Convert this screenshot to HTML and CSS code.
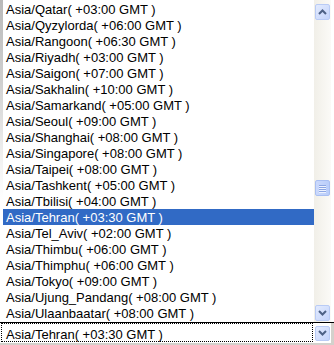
FILE: index.html
```html
<!DOCTYPE html>
<html>
<head>
<meta charset="utf-8">
<link rel="stylesheet" href="styles.css">
</head>
<body>
<div class="combo">
  <div class="popup">
    <div class="edge"></div>
    <ul class="options">
      <li>Asia/Qatar( +03:00 GMT )</li>
      <li>Asia/Qyzylorda( +06:00 GMT )</li>
      <li>Asia/Rangoon( +06:30 GMT )</li>
      <li>Asia/Riyadh( +03:00 GMT )</li>
      <li>Asia/Saigon( +07:00 GMT )</li>
      <li>Asia/Sakhalin( +10:00 GMT )</li>
      <li>Asia/Samarkand( +05:00 GMT )</li>
      <li>Asia/Seoul( +09:00 GMT )</li>
      <li>Asia/Shanghai( +08:00 GMT )</li>
      <li>Asia/Singapore( +08:00 GMT )</li>
      <li>Asia/Taipei( +08:00 GMT )</li>
      <li>Asia/Tashkent( +05:00 GMT )</li>
      <li>Asia/Tbilisi( +04:00 GMT )</li>
      <li class="selected">Asia/Tehran( +03:30 GMT )</li>
      <li>Asia/Tel_Aviv( +02:00 GMT )</li>
      <li>Asia/Thimbu( +06:00 GMT )</li>
      <li>Asia/Thimphu( +06:00 GMT )</li>
      <li>Asia/Tokyo( +09:00 GMT )</li>
      <li>Asia/Ujung_Pandang( +08:00 GMT )</li>
      <li>Asia/Ulaanbaatar( +08:00 GMT )</li>
    </ul>
    <div class="scrollbar">
      <div class="sb-btn"><svg width="9" height="6" viewBox="0 0 9 6"><path d="M1 5 L4.5 1.5 L8 5" stroke="#4d6185" stroke-width="2" fill="none"/></svg></div>
      <div class="track">
        <div class="thumb" style="margin-top:160px"><span></span><span></span><span></span><span></span></div>
      </div>
      <div class="sb-btn"><svg width="9" height="6" viewBox="0 0 9 6"><path d="M1 1 L4.5 4.5 L8 1" stroke="#4d6185" stroke-width="2" fill="none"/></svg></div>
    </div>
    <div class="rim"></div>
  </div>
  <div class="select-row">
    <div class="select">
      <div class="value">Asia/Tehran( +03:30 GMT )</div>
      <div class="dd-btn"><svg width="9" height="6" viewBox="0 0 9 6"><path d="M1 1 L4.5 4.5 L8 1" stroke="#4d6185" stroke-width="2" fill="none"/></svg></div>
    </div>
  </div>
</div>
</body>
</html>
```

FILE: styles.css
```css
html, body {
  margin: 0;
  padding: 0;
}
body {
  width: 334px;
  height: 345px;
  overflow: hidden;
  background: #fff;
  font-family: "Liberation Sans", Arial, sans-serif;
  font-size: 13px;
  color: #000;
}
.combo {
  display: flex;
  flex-direction: column;
  height: 345px;
}
.popup {
  display: flex;
  height: 323px;
  box-sizing: border-box;
  border-bottom: 1px solid #000;
  background: #fff;
}
.edge {
  width: 3px;
  background: linear-gradient(#b9b9b9, #cfcfcf 25%, #f2f2f2 50%, #fff 62%);
}
.options {
  list-style: none;
  margin: 0;
  padding: 1px 0 0;
  width: 311px;
}
.options li {
  height: 16px;
  box-sizing: border-box;
  padding: 2px 0 0 3px;
  line-height: 14px;
  white-space: nowrap;
}
.options li.selected {
  background: #316ac5;
  color: #fff;
}
.scrollbar {
  width: 17px;
  display: flex;
  flex-direction: column;
  padding: 4px 0 1px;
  box-sizing: border-box;
  background: linear-gradient(to right, #f1efe8, #fbfaf7);
}
.sb-btn {
  height: 16px;
  margin: 0 1px;
  box-sizing: border-box;
  border: 1px solid #b9cbf5;
  border-radius: 2px;
  background: linear-gradient(135deg, #e3ebfe, #c4d4fb);
  display: flex;
  align-items: center;
  justify-content: center;
}
.track {
  flex: 1;
  display: flex;
  flex-direction: column;
}
.thumb {
  height: 16px;
  margin: 0 1px;
  box-sizing: border-box;
  border: 1px solid #a9bff2;
  border-radius: 2px;
  background: linear-gradient(to right, #cbd9fc, #b9cdfa);
  display: flex;
  flex-direction: column;
  align-items: center;
  justify-content: center;
  gap: 1px;
}
.thumb span {
  width: 7px;
  height: 1px;
  background: #8ca6e3;
  box-shadow: 0 1px 0 #eef3ff;
}
.rim {
  flex: 1;
}
.select-row {
  flex: 1;
  background: #d3d1cc;
  padding: 0 3px 2px 0;
}
.select {
  height: 20px;
  display: flex;
  align-items: center;
  background: #fff;
  padding-left: 1px;
}
.value {
  flex: 1;
  align-self: flex-start;
  height: 19px;
  box-sizing: border-box;
  border: 1px dotted #000;
  padding: 4px 0 0 4px;
  line-height: 14px;
  white-space: nowrap;
}
.dd-btn {
  width: 15px;
  height: 15px;
  margin: 0 1px 0 2px;
  box-sizing: border-box;
  border: 1px solid #b9cbf5;
  border-radius: 2px;
  background: linear-gradient(135deg, #e3ebfe, #c4d4fb);
  display: flex;
  align-items: center;
  justify-content: center;
}
```
